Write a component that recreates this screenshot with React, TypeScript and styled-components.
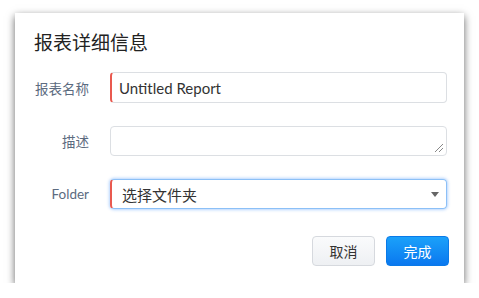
import * as React from 'react';
import styled, { createGlobalStyle } from 'styled-components';

const GlobalStyle = createGlobalStyle`
  html, body {
    margin: 0;
    padding: 0;
    background: #fff;
  }
  * {
    box-sizing: border-box;
  }
`

const Page = styled.div`
  padding: 13px 15px 0 15px;
  font-family: Lato, 'Noto Sans CJK SC', sans-serif;
`

const Dialog = styled.div`
  width: 449px;
  height: 270px;
  background: #fff;
  box-shadow: 0 3px 8px rgba(0, 0, 0, 0.6);
  padding: 18px 17px 0 19px;
  display: flex;
  flex-direction: column;
`

const Title = styled.h1`
  margin: 0;
  font-size: 19px;
  line-height: 22px;
  font-weight: 400;
  color: #222;
  font-family: 'Noto Sans CJK SC', sans-serif;
`

const Form = styled.div`
  margin-top: 19px;
  display: flex;
  flex-direction: column;
  gap: 23px;
`

const Row = styled.div`
  display: flex;
  align-items: center;
  gap: 21px;
`

const Label = styled.label`
  width: 55px;
  flex: none;
  text-align: right;
  font-size: 13.5px;
  color: #5c6b80;
  font-family: Lato, 'Noto Sans CJK SC', sans-serif;
`

const Field = styled.div<{ $required?: boolean; $focus?: boolean; $h: number }>`
  position: relative;
  flex: 1;
  height: ${p => p.$h}px;
  border: 1px solid ${p => (p.$focus ? '#8cc0f7' : '#dcdfe3')};
  border-left: ${p => (p.$required ? '2px solid #e9594f' : undefined)};
  border-radius: 4px;
  box-shadow: ${p => (p.$focus ? '0 0 3px 1px rgba(90, 160, 250, 0.45)' : 'none')};
  display: flex;
  align-items: center;
  font-size: 15px;
  color: #333;
`

const Value = styled.span<{ $pad: number }>`
  padding-left: ${p => p.$pad}px;
  font-family: Lato, 'Noto Sans CJK SC', sans-serif;
`

const Grip = styled.svg`
  position: absolute;
  right: 2px;
  bottom: 2px;
`

const Caret = styled.span`
  position: absolute;
  right: 7px;
  top: 50%;
  margin-top: -2px;
  width: 0;
  height: 0;
  border-left: 4.5px solid transparent;
  border-right: 4.5px solid transparent;
  border-top: 5px solid #666;
`

const Footer = styled.div`
  margin-top: 27px;
  margin-right: -2px;
  display: flex;
  justify-content: flex-end;
  gap: 11px;
`

const Button = styled.button<{ $primary?: boolean }>`
  width: 63px;
  height: 30px;
  border-radius: 4px;
  font-size: 14px;
  font-family: 'Noto Sans CJK SC', sans-serif;
  cursor: pointer;
  border: 1px solid ${p => (p.$primary ? '#0a7ae8' : '#d6d9de')};
  background: ${p =>
    p.$primary
      ? 'linear-gradient(#1ba1fa, #0a78ef)'
      : 'linear-gradient(#fafbfc, #eef0f3)'};
  color: ${p => (p.$primary ? '#fff' : '#333')};
`

export default function App() {
  return (
    <Page>
      <GlobalStyle />
      <Dialog>
        <Title>报表详细信息</Title>
        <Form>
          <Row>
            <Label>报表名称</Label>
            <Field $required $h={31}>
              <Value $pad={7}>Untitled Report</Value>
            </Field>
          </Row>
          <Row>
            <Label>描述</Label>
            <Field $h={30}>
              <Grip width="10" height="10" viewBox="0 0 10 10">
                <line x1="1" y1="9" x2="9" y2="1" stroke="#888" strokeWidth="1" />
                <line x1="5" y1="9" x2="9" y2="5" stroke="#888" strokeWidth="1" />
              </Grip>
            </Field>
          </Row>
          <Row>
            <Label>Folder</Label>
            <Field $required $focus $h={30}>
              <Value $pad={10}>选择文件夹</Value>
              <Caret />
            </Field>
          </Row>
        </Form>
        <Footer>
          <Button>取消</Button>
          <Button $primary>完成</Button>
        </Footer>
      </Dialog>
    </Page>
  );
}
